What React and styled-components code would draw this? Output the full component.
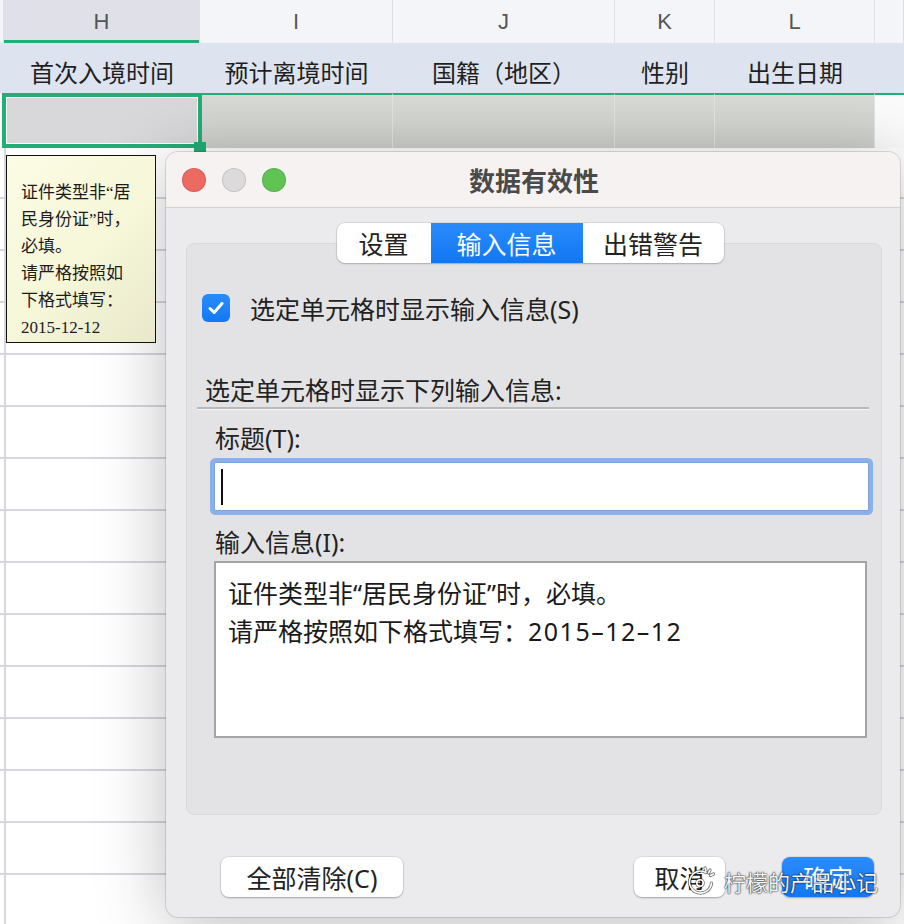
import React from 'react'
import styled, { createGlobalStyle } from 'styled-components'

const GlobalStyle = createGlobalStyle`
  html, body { margin: 0; padding: 0; }
  body {
    background: #fff;
    font-family: "Noto Sans", "Noto Sans CJK SC", sans-serif;
  }
`

const letters = ['', 'H', 'I', 'J', 'K', 'L', '']
const fields = ['', '首次入境时间', '预计离境时间', '国籍（地区）', '性别', '出生日期', '']
const bodyRows = Array.from({ length: 15 })

const Page = styled.div`
  position: relative;
  width: 904px;
  height: 924px;
  overflow: hidden;
  background: #fff;
`

const Sheet = styled.div`
  display: grid;
  grid-template-columns: 4px 196px 193px 222px 100px 160px 1fr;
  grid-template-rows: 43px 50px 55px 51px;
  grid-auto-rows: 52px;
`

const LetterCell = styled.div`
  display: flex;
  align-items: center;
  justify-content: center;
  background: ${p => (p.$active ? '#dfe0e8' : '#f4f5f8')};
  border-right: 1px solid #e0e0e4;
  box-shadow: ${p => (p.$active ? 'inset 0 -3px 0 #23ad77' : 'none')};
  color: #555;
  font: 300 22px "Liberation Sans", "Noto Sans", sans-serif;
`

const FieldCell = styled.div`
  display: flex;
  align-items: center;
  justify-content: center;
  padding-top: 6px;
  background: #dde3ef;
  color: #1f1f1f;
  font: 24px "Liberation Serif", "Noto Sans CJK SC", serif;
  white-space: nowrap;
`

const RowCell = styled.div`
  background: ${p => (p.$blank ? '#fbfbfb' : 'linear-gradient(#d8dbd5, #cdcfcb)')};
  border-top: ${p => (p.$first ? 'none' : '2px solid #23ad77')};
  border-right: ${p => (p.$blank ? 'none' : '1px solid #e2e3e0')};
`

const ActiveCell = styled.div`
  position: relative;
  background: #d8d7da;
  border: 4px solid #23ad77;
  box-shadow: inset 0 0 0 1px #fff;
  margin-left: -2px;
  margin-right: -2px;

  &::after {
    content: '';
    position: absolute;
    right: -8px;
    bottom: -9px;
    width: 12px;
    height: 11px;
    background: #23ad77;
  }
`

const BodyCell = styled.div`
  background: #fff;
  border-bottom: 2px solid #d6d6dd;
  border-left: ${p => (p.$line ? '2px solid #d6d6dd' : 'none')};
`

const Tooltip = styled.div`
  position: absolute;
  left: 6px;
  top: 155px;
  width: 150px;
  height: 188px;
  box-sizing: border-box;
  padding: 23px 0 0 14px;
  background: linear-gradient(135deg, #fcfce6 0%, #f6f6d8 55%, #e9e8cc 100%);
  border: 1px solid #111;
  color: #1c1c1c;
  font: 17px/27px "Liberation Serif", "Noto Sans CJK SC", serif;
  z-index: 2;
`

const Dialog = styled.div`
  position: absolute;
  left: 166px;
  top: 152px;
  width: 734px;
  height: 765px;
  display: flex;
  flex-direction: column;
  border-radius: 12px;
  background: #ebeaec;
  overflow: hidden;
  box-shadow: 0 0 0 1px rgba(0, 0, 0, 0.12), 0 10px 70px rgba(0, 0, 0, 0.26);
  z-index: 1;
  color: #222;
`

const TitleBar = styled.div`
  height: 55px;
  flex: none;
  display: grid;
  grid-template-columns: 1fr auto 1fr;
  align-items: center;
  padding: 0 16px;
  background: #f7f2f2;
  border-bottom: 1px solid #d3d1d1;
`

const Lights = styled.div`
  display: flex;
  gap: 16px;
`

const Light = styled.span`
  width: 24px;
  height: 24px;
  border-radius: 50%;
  background: ${p => p.$color};
  box-shadow: inset 0 0 0 1px rgba(0, 0, 0, 0.1);
`

const Title = styled.div`
  font-size: 26px;
  font-weight: 600;
  color: #4a4a4a;
  padding-left: 2px;
`

const Content = styled.div`
  padding: 15px 18px 0 20px;
`

const TabsRow = styled.div`
  position: relative;
  z-index: 1;
  display: flex;
  justify-content: center;
  padding-right: 8px;
  height: 40px;
`

const Tabs = styled.div`
  display: flex;
  background: #fff;
  border-radius: 8px;
  overflow: hidden;
  box-shadow: 0 0 0 1px rgba(0, 0, 0, 0.07), 0 1px 2px rgba(0, 0, 0, 0.2);
`

const Tab = styled.div`
  width: ${p => p.$w}px;
  display: flex;
  align-items: center;
  justify-content: center;
  font-size: 25px;
  color: ${p => (p.$active ? '#fff' : '#222')};
  background: ${p => (p.$active ? 'linear-gradient(#2a8bfa, #1077f5)' : 'transparent')};
`

const Panel = styled.div`
  margin-top: -20px;
  height: 572px;
  box-sizing: border-box;
  background: #e3e2e5;
  border: 1px solid #dad9dc;
  border-radius: 8px;
  padding-top: 50px;
`

const CheckRow = styled.div`
  display: flex;
  align-items: center;
  gap: 20px;
  padding-left: 15px;
  height: 28px;
  font-size: 25px;
`

const CheckBox = styled.span`
  width: 28px;
  height: 28px;
  border-radius: 6px;
  background: linear-gradient(#2a8bfa, #1278f5);
  display: flex;
  align-items: center;
  justify-content: center;
`

const SectionLabel = styled.div`
  margin-top: 53px;
  padding-left: 18px;
  font-size: 25px;
  line-height: 30px;
`

const Divider = styled.div`
  margin: 2px 12px 0 10px;
  height: 2px;
  background: #b9b9bc;
  box-shadow: 0 1px 0 #f6f6f6;
`

const FieldLabel = styled.div`
  margin-top: ${p => p.$top}px;
  padding-left: 28px;
  font-size: 25px;
  line-height: 30px;
`

const TextInput = styled.div`
  margin: 9px 0 0 27px;
  width: 655px;
  height: 49px;
  box-sizing: border-box;
  background: #fff;
  border: 1px solid #7ea3da;
  border-radius: 2px;
  box-shadow: 0 0 0 4px #8ab1ea;
  display: flex;
  align-items: center;
  padding-left: 6px;
`

const Caret = styled.span`
  width: 2px;
  height: 36px;
  background: #111;
`

const TextArea = styled.div`
  margin: 4px 0 0 27px;
  width: 653px;
  height: 177px;
  box-sizing: border-box;
  background: #fff;
  border: 2px solid #a4a4a6;
  padding: 11px 0 0 12px;
  font-size: 25px;
  line-height: 38px;
  color: #1a1a1a;
`

const Date = styled.span`
  letter-spacing: 1.5px;
`

const Footer = styled.div`
  display: flex;
  align-items: center;
  margin-top: 42px;
  padding: 0 26px 0 55px;
`

const Button = styled.div`
  width: ${p => p.$w}px;
  height: 40px;
  margin-left: ${p => p.$gap || 0}px;
  display: flex;
  align-items: center;
  justify-content: center;
  border-radius: 8px;
  font-size: 25px;
  color: ${p => (p.$primary ? '#fff' : '#222')};
  background: ${p => (p.$primary ? 'linear-gradient(#2b8cfa, #1277f4)' : '#fff')};
  box-shadow: 0 0 0 1px rgba(0, 0, 0, 0.06), 0 1px 2px rgba(0, 0, 0, 0.25);
`

const Spacer = styled.div`
  flex: 1;
`

const Watermark = styled.div`
  position: absolute;
  left: 684px;
  top: 864px;
  display: flex;
  align-items: center;
  gap: 6px;
  z-index: 3;
  color: #f4f4f4;
  font-size: 22px;
  text-shadow: 0 0 2px rgba(0, 0, 0, 0.85), 0 0 1px rgba(0, 0, 0, 0.9);
`

const Check = () => (
  <svg width="20" height="20" viewBox="0 0 20 20">
    <path d="M4 10.5 L8.2 14.5 L16 5.5" fill="none" stroke="#fff" strokeWidth="3" strokeLinecap="round" strokeLinejoin="round" />
  </svg>
)

const WeChatMark = () => (
  <svg width="34" height="34" viewBox="0 0 34 34">
    <g fill="none" strokeLinecap="round">
      <g stroke="rgba(0,0,0,0.55)" strokeWidth="3.2">
        <path d="M22 8.5 A11 11 0 1 0 27.5 19" />
        <circle cx="16" cy="19" r="3.2" />
        <path d="M21 4 L22 7 M26 6 L24.5 9 M29.5 10 L26.5 11.5" />
      </g>
      <g stroke="#fff" strokeWidth="1.6">
        <path d="M22 8.5 A11 11 0 1 0 27.5 19" />
        <circle cx="16" cy="19" r="3.2" />
        <path d="M21 4 L22 7 M26 6 L24.5 9 M29.5 10 L26.5 11.5" />
      </g>
    </g>
  </svg>
)

export default function App() {
  return (
    <Page>
      <GlobalStyle />
      <Sheet>
        {letters.map((l, i) => (
          <LetterCell key={'l' + i} $active={l === 'H'}>{l}</LetterCell>
        ))}
        {fields.map((f, i) => (
          <FieldCell key={'f' + i}>{f}</FieldCell>
        ))}
        {letters.map((l, i) =>
          l === 'H' ? (
            <ActiveCell key={'r' + i} />
          ) : (
            <RowCell key={'r' + i} $first={i === 0} $blank={i === 0 || i === letters.length - 1} />
          )
        )}
        {bodyRows.map((_, r) =>
          letters.map((l, i) => <BodyCell key={r + '-' + i} $line={i === 1} />)
        )}
      </Sheet>

      <Tooltip>
        证件类型非“居<br />
        民身份证”时，<br />
        必填。<br />
        请严格按照如<br />
        下格式填写：<br />
        2015-12-12
      </Tooltip>

      <Dialog>
        <TitleBar>
          <Lights>
            <Light $color="#ec6a5f" />
            <Light $color="#dcdadb" />
            <Light $color="#61c354" />
          </Lights>
          <Title>数据有效性</Title>
          <span />
        </TitleBar>

        <Content>
          <TabsRow>
            <Tabs>
              <Tab $w={94}>设置</Tab>
              <Tab $w={152} $active>输入信息</Tab>
              <Tab $w={141}>出错警告</Tab>
            </Tabs>
          </TabsRow>

          <Panel>
            <CheckRow>
              <CheckBox><Check /></CheckBox>
              选定单元格时显示输入信息(S)
            </CheckRow>
            <SectionLabel>选定单元格时显示下列输入信息:</SectionLabel>
            <Divider />
            <FieldLabel $top={14}>标题(T):</FieldLabel>
            <TextInput><Caret /></TextInput>
            <FieldLabel $top={16}>输入信息(I):</FieldLabel>
            <TextArea>
              证件类型非“居民身份证”时，必填。<br />
              请严格按照如下格式填写：<Date>2015–12–12</Date>
            </TextArea>
          </Panel>
        </Content>

        <Footer>
          <Button $w={182}>全部清除(C)</Button>
          <Spacer />
          <Button $w={91}>取消</Button>
          <Button $w={92} $gap={57} $primary>确定</Button>
        </Footer>
      </Dialog>

      <Watermark>
        <WeChatMark />
        柠檬的产品小记
      </Watermark>
    </Page>
  )
}
